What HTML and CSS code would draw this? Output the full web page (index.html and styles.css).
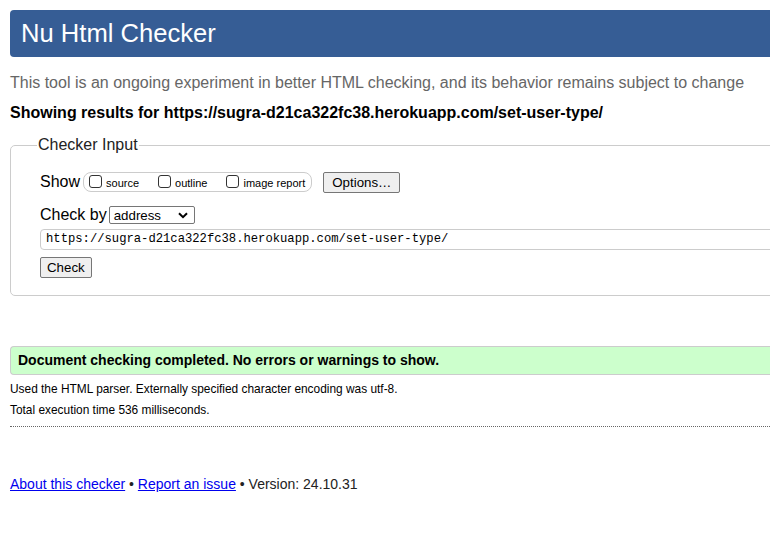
FILE: index.html
```html
<!DOCTYPE html>
<html lang="en">
<head>
<meta charset="utf-8">
<title>Nu Html Checker</title>
<link rel="stylesheet" href="styles.css">
</head>
<body>
<div class="page">
  <h1 class="title">Nu Html Checker</h1>
  <p class="intro">This tool is an ongoing experiment in better HTML checking, and its behavior remains subject to change</p>
  <p class="showing">Showing results for https://sugra-d21ca322fc38.herokuapp.com/set-user-type/</p>
  <fieldset class="input-box">
    <legend class="legend">Checker Input</legend>
    <div class="row show-row">
      <span class="row-label">Show</span>
      <span class="opts">
        <label class="opt"><span class="cb"></span>source</label>
        <label class="opt"><span class="cb"></span>outline</label>
        <label class="opt"><span class="cb"></span>image report</label>
      </span>
      <span class="btn opt-btn">Options…</span>
    </div>
    <div class="row by-row">
      <span class="row-label">Check by</span>
      <span class="select">address<svg class="chev" width="10" height="7" viewBox="0 0 10 7"><path d="M1 1.2 L5 5.2 L9 1.2" fill="none" stroke="#000" stroke-width="2"/></svg></span>
    </div>
    <div class="url">https://sugra-d21ca322fc38.herokuapp.com/set-user-type/</div>
    <div class="row"><span class="btn check-btn">Check</span></div>
  </fieldset>
  <p class="success">Document checking completed. No errors or warnings to show.</p>
  <p class="details">Used the HTML parser. Externally specified character encoding was utf-8.</p>
  <p class="details">Total execution time 536 milliseconds.</p>
  <hr class="dots">
  <p class="footer"><a href="#">About this checker</a> • <a href="#">Report an issue</a> • Version: 24.10.31</p>
</div>
</body>
</html>
```
FILE: styles.css
```css
html { overflow: hidden; }
body {
  margin: 0;
  font-family: "Liberation Sans", Arial, sans-serif;
  color: #000;
  background: #fff;
}
.page {
  padding: 10px 0 0 10px;
  width: 820px;
}
.title {
  margin: 0;
  background: #365d95;
  color: #fff;
  font-weight: normal;
  font-size: 25.6px;
  line-height: 31px;
  padding: 8px 11px;
  border-radius: 4px 0 0 4px;
}
.intro {
  margin: 16px 0 0;
  color: #666;
  font-size: 16px;
  line-height: 20px;
}
.showing {
  margin: 10px 0 0;
  font-weight: bold;
  font-size: 16px;
  line-height: 20px;
}
.input-box {
  margin: 12px 0 0;
  border: 1px solid #ccc;
  border-radius: 5px 0 0 5px;
  padding: 16px 0 17px 29px;
  min-width: 0;
}
.legend {
  padding: 0 1px;
  margin-left: -3px;
  font-size: 16px;
  color: #222;
  line-height: 20px;
}
.row {
  display: flex;
  align-items: center;
  font-size: 16px;
}
.row-label { line-height: 20px; }
.show-row { height: 22px; margin-bottom: 11px; }
.opts {
  display: flex;
  align-items: center;
  margin-left: 3px;
  height: 18px;
  border: 1px solid #ccc;
  border-radius: 8px;
  padding: 0 6px 0 5px;
  font-size: 11px;
  gap: 19px;
}
.opt { display: flex; align-items: center; padding-top: 2px; }
.cb {
  width: 11px;
  height: 11px;
  border: 1px solid #333;
  border-radius: 3px;
  margin-right: 4px;
  margin-top: -3px;
}
.btn {
  display: inline-block;
  border: 1px solid #767676;
  border-radius: 2px;
  background: #efefef;
  font-size: 13.3px;
  line-height: 19px;
  padding: 0 6px;
}
.opt-btn { margin-left: 11px; padding: 0 8px 0 8px; }
.by-row { height: 22px; margin-bottom: 3px; }
.select {
  display: flex;
  align-items: center;
  justify-content: space-between;
  width: 74px;
  height: 16px;
  margin-left: 2px;
  border: 1px solid #767676;
  border-radius: 2px;
  font-size: 13.3px;
  padding: 0 6px 0 4px;
}
.url {
  border: 1px solid #ccc;
  border-radius: 4px 0 0 4px;
  height: 19px;
  line-height: 19px;
  padding-left: 5px;
  font-family: "Liberation Mono", "Courier New", monospace;
  font-size: 12.2px;
  margin-bottom: 7px;
}
.check-btn { margin-left: 0; padding: 0 6px; }
.success {
  margin: 50px 0 0;
  background: #ccffcc;
  border: 1px solid #ccc;
  border-right: 0;
  border-radius: 4px 0 0 4px;
  padding: 5px 7px;
  font-weight: bold;
  font-size: 14px;
  line-height: 17px;
}
.details {
  margin: 7px 0 0;
  font-size: 11.9px;
  line-height: 15px;
}
.details + .details { margin-top: 6px; }
.dots {
  margin: 8px 0 0;
  border: 0;
  border-top: 1px dotted #666;
  height: 0;
}
.footer {
  margin: 48px 0 0;
  font-size: 14px;
  line-height: 18px;
  color: #222;
}
.footer a { color: #00e; }
```
